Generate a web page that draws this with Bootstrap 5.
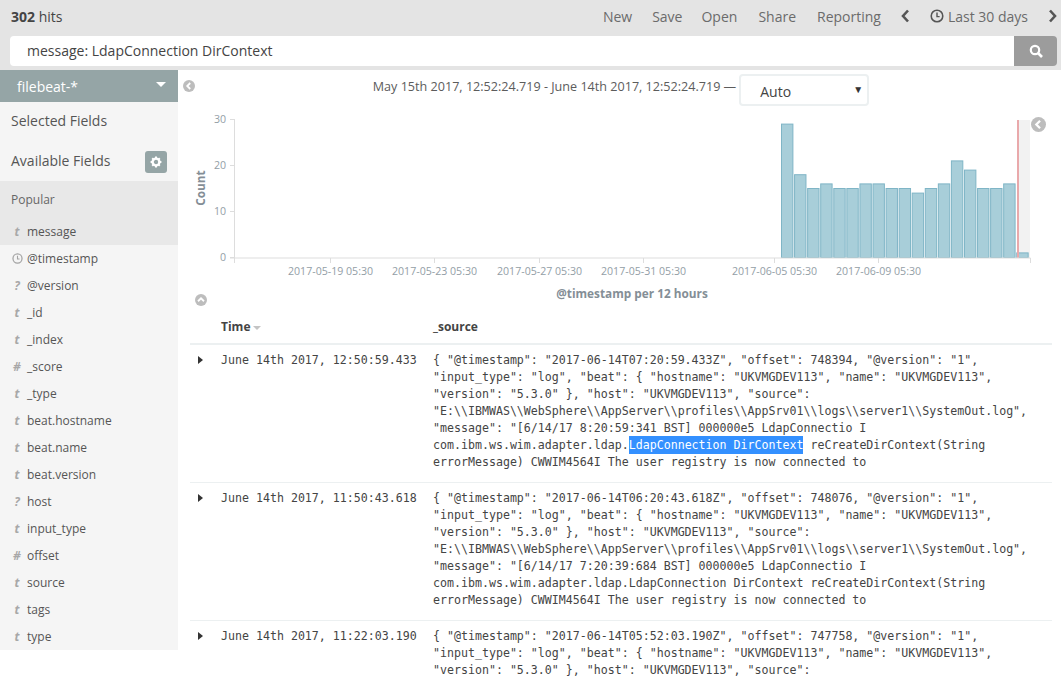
<!doctype html>
<html lang="en">

<head>
    <meta charset="utf-8">
    <meta name="viewport" content="width=device-width, initial-scale=1">
    <title>Discover - Kibana</title>
    <link href="https://cdn.jsdelivr.net/npm/bootstrap@5.3.3/dist/css/bootstrap.min.css" rel="stylesheet">
    <style>
        html, body {
            height: 680px;
            overflow: hidden;
        }

        body {
            font-family: "Open Sans", sans-serif;
            font-size: 14px;
            color: #444;
            background: #fff;
        }

        .top-bar {
            height: 36px;
            background: #e4e4e4;
            color: #5f5f5f;
            padding: 0 4px 4px 11px;
        }

        .top-bar .hits {
            color: #444;
        }

        .menu-link {
            color: #6b6b6b;
            margin-left: 21px;
        }

        .menu-first {
            margin-left: auto;
        }

        .menu-tight {
            margin-left: 19px;
        }

        .menu-new-gap {
            margin-left: 20px;
        }

        .menu-icon {
            flex: none;
            margin-left: 20px;
        }

        .menu-clock {
            color: #555;
            margin-right: 4px;
        }

        .search-row {
            height: 34px;
            background: #e4e4e4;
            padding: 0 4px 4px 10px;
        }

        .search-text {
            background: #fff;
            border-radius: 4px 0 0 4px;
            padding: 0 0 2px 17px;
            color: #444;
        }

        .search-btn {
            width: 43px;
            background: #9c9c9c;
            border-radius: 0 4px 4px 0;
        }

        .side-panel {
            width: 178px;
            height: 580px;
            flex: none;
        }

        .index-head {
            height: 32px;
            background: #95a5a6;
            color: #fff;
            padding: 0 12px 0 17px;
        }

        .caret-down {
            width: 0;
            height: 0;
            margin-top: -3px;
            border-left: 5px solid transparent;
            border-right: 5px solid transparent;
            border-top: 5px solid #fff;
        }

        .field-heads {
            background: #f5f5f5;
            height: 79px;
            padding: 0 11px;
        }

        .field-head {
            height: 40px;
            color: #555;
        }

        .field-head-text {
            margin-top: -4px;
        }

        .gear-btn {
            width: 22px;
            height: 22px;
            background: #95a5a6;
            border-radius: 3px;
        }

        .popular-block {
            background: #e8e8e8;
            height: 64px;
        }

        .popular-title {
            height: 37px;
            padding: 0 11px;
            font-size: 12px;
            color: #666;
        }

        .field-list {
            background: #f5f5f5;
            height: 405px;
        }

        .field-row {
            height: 27px;
            font-size: 12px;
            color: #555;
            padding-left: 11px;
        }

        .type-mark {
            width: 12px;
            margin-right: 4px;
            text-align: center;
            font-style: italic;
            font-weight: 700;
            color: #a8a8a8;
            flex: none;
        }

        .type-clock {
            color: #a3a3a3;
        }

        .main-pane {
            flex: 1;
            min-width: 0;
            height: 610px;
        }

        .time-line {
            height: 40px;
            padding: 4px 0 0 3px;
            font-size: 12.6px;
            color: #5c5c5c;
        }

        .time-range {
            margin-top: 4px;
        }

        .auto-select {
            width: 130px;
            height: 32px;
            border: 2px solid #ecf0f1;
            border-radius: 4px;
            margin-left: 3px;
            padding: 2px 4px 0 19px;
            font-size: 14px;
            color: #444;
        }

        .select-arrow {
            font-size: 10px;
            color: #333;
            margin-top: -3px;
        }

        .chart-box {
            display: block;
            width: 883px;
            height: 192px;
        }

        .chart-box text {
            font-family: "Open Sans", sans-serif;
            font-size: 10.6px;
            fill: #939ea6;
        }

        .chart-box .axis-title {
            font-size: 11.8px;
            font-weight: 700;
            fill: #848e96;
        }

        .round-toggle {
            position: absolute;
            display: block;
        }

        .toggle-side {
            left: 5px;
            top: 10px;
        }

        .toggle-spy {
            left: 853px;
            top: 47px;
        }

        .toggle-chart {
            left: 17px;
            top: 224px;
        }

        .doc-table {
            margin: 0 9px 0 12px;
            font-size: 11.62px;
        }

        .doc-head {
            height: 43px;
            padding-bottom: 7px;
            border-bottom: 2px solid #ecf0f1;
            font-size: 12px;
            font-weight: 700;
            color: #444;
        }

        .sort-arrow {
            display: inline-block;
            width: 0;
            height: 0;
            margin-left: 3px;
            vertical-align: 1px;
            border-left: 4px solid transparent;
            border-right: 4px solid transparent;
            border-top: 4px solid #c4c4c4;
        }

        .col-arrow {
            width: 31px;
            flex: none;
        }

        .col-time {
            width: 212px;
            flex: none;
        }

        .doc-row {
            padding: 7px 0 11px;
            border-bottom: 1px solid #ecf0f1;
            font-family: "DejaVu Sans Mono", monospace;
            line-height: 17px;
            color: #444;
        }

        .doc-row .source-text {
            white-space: pre;
        }

        .row-arrow {
            display: inline-block;
            width: 0;
            height: 0;
            margin-left: 8px;
            border-top: 4px solid transparent;
            border-bottom: 4px solid transparent;
            border-left: 5px solid #333;
        }

        .hl-text {
            padding: 2px 0;
            background: #3390ff;
            color: #fff;
        }
    </style>
</head>

<body>
    <svg width="0" height="0" class="position-absolute">
        <symbol id="ic-round-left" viewBox="0 0 24 24">
            <circle cx="12" cy="12" r="12" fill="#bdbdbd" />
            <path d="M14.5 6 L8.5 12 L14.5 18" fill="none" stroke="#fff" stroke-width="3.6" />
        </symbol>
        <symbol id="ic-round-up" viewBox="0 0 24 24">
            <circle cx="12" cy="12" r="12" fill="#bdbdbd" />
            <path d="M6 14.5 L12 8.5 L18 14.5" fill="none" stroke="#fff" stroke-width="3.6" />
        </symbol>
        <symbol id="ic-clock" viewBox="0 0 16 16">
            <circle cx="8" cy="8" r="6.6" fill="none" stroke="currentColor" stroke-width="1.8" />
            <path d="M8 4 V8.7 H11" fill="none" stroke="currentColor" stroke-width="1.6" />
        </symbol>
    </svg>

    <div class="top-bar d-flex align-items-center">
        <div class="hits"><b>302</b> hits</div>
        <span class="menu-link menu-first">New</span>
        <span class="menu-link menu-new-gap">Save</span>
        <span class="menu-link menu-tight">Open</span>
        <span class="menu-link">Share</span>
        <span class="menu-link">Reporting</span>
        <svg class="menu-icon" width="9" height="14" viewBox="0 0 9 14"><path d="M7 1.5 L2 7 L7 12.5" fill="none" stroke="#555" stroke-width="2.6" /></svg>
        <svg class="menu-icon menu-clock" width="14" height="14"><use href="#ic-clock" /></svg>
        <span class="menu-link ms-0">Last 30 days</span>
        <svg class="menu-icon" width="9" height="14" viewBox="0 0 9 14"><path d="M2 1.5 L7 7 L2 12.5" fill="none" stroke="#555" stroke-width="2.6" /></svg>
    </div>

    <div class="search-row d-flex">
        <div class="search-text flex-grow-1 d-flex align-items-center">message: LdapConnection DirContext</div>
        <div class="search-btn d-flex align-items-center justify-content-center">
            <svg width="14" height="14" viewBox="0 0 14 14"><circle cx="6" cy="6" r="4.2" fill="none" stroke="#fff" stroke-width="2.2" /><path d="M9 9 L13 13" stroke="#fff" stroke-width="2.6" /></svg>
        </div>
    </div>

    <div class="d-flex position-relative">
        <div class="side-panel">
            <div class="index-head d-flex align-items-center justify-content-between">
                <span>filebeat-*</span>
                <span class="caret-down"></span>
            </div>
            <div class="field-heads">
                <div class="field-head d-flex align-items-center"><span class="field-head-text">Selected Fields</span></div>
                <div class="field-head d-flex align-items-center justify-content-between">
                    <span class="field-head-text">Available Fields</span>
                    <span class="gear-btn d-flex align-items-center justify-content-center">
                        <svg width="12" height="12" viewBox="0 0 12 12"><circle cx="6" cy="6" r="3.4" fill="none" stroke="#fff" stroke-width="2.4" /><path d="M6 .6 V2.4 M6 9.6 V11.4 M.6 6 H2.4 M9.6 6 H11.4 M2.2 2.2 L3.4 3.4 M8.6 8.6 L9.8 9.8 M2.2 9.8 L3.4 8.6 M8.6 3.4 L9.8 2.2" stroke="#fff" stroke-width="2" /></svg>
                    </span>
                </div>
            </div>
            <div class="popular-block">
                <div class="popular-title d-flex align-items-center">Popular</div>
                <div class="field-row d-flex align-items-center"><span class="type-mark">t</span>message</div>
            </div>
            <div class="field-list">
                <div class="field-row d-flex align-items-center"><span class="type-mark d-flex justify-content-center"><svg class="type-clock" width="11" height="11"><use href="#ic-clock" /></svg></span>@timestamp</div>
                <div class="field-row d-flex align-items-center"><span class="type-mark">?</span>@version</div>
                <div class="field-row d-flex align-items-center"><span class="type-mark">t</span>_id</div>
                <div class="field-row d-flex align-items-center"><span class="type-mark">t</span>_index</div>
                <div class="field-row d-flex align-items-center"><span class="type-mark">#</span>_score</div>
                <div class="field-row d-flex align-items-center"><span class="type-mark">t</span>_type</div>
                <div class="field-row d-flex align-items-center"><span class="type-mark">t</span>beat.hostname</div>
                <div class="field-row d-flex align-items-center"><span class="type-mark">t</span>beat.name</div>
                <div class="field-row d-flex align-items-center"><span class="type-mark">t</span>beat.version</div>
                <div class="field-row d-flex align-items-center"><span class="type-mark">?</span>host</div>
                <div class="field-row d-flex align-items-center"><span class="type-mark">t</span>input_type</div>
                <div class="field-row d-flex align-items-center"><span class="type-mark">#</span>offset</div>
                <div class="field-row d-flex align-items-center"><span class="type-mark">t</span>source</div>
                <div class="field-row d-flex align-items-center"><span class="type-mark">t</span>tags</div>
                <div class="field-row d-flex align-items-center"><span class="type-mark">t</span>type</div>
            </div>
        </div>

        <div class="main-pane position-relative">
            <svg class="round-toggle toggle-side" width="12" height="12"><use href="#ic-round-left" /></svg>
            <svg class="round-toggle toggle-spy" width="15" height="15"><use href="#ic-round-left" /></svg>
            <svg class="round-toggle toggle-chart" width="12" height="12"><use href="#ic-round-up" /></svg>

            <div class="time-line d-flex align-items-start justify-content-center">
                <span class="time-range">May 15th 2017, 12:52:24.719 - June 14th 2017, 12:52:24.719 &mdash;</span>
                <div class="auto-select d-flex align-items-center justify-content-between">
                    <span>Auto</span><span class="select-arrow">&#9660;</span>
                </div>
            </div>

            <svg class="chart-box" id="chart" viewBox="178 110 883 192"></svg>

            <div class="doc-table">
                <div class="doc-head d-flex align-items-end">
                    <div class="col-arrow"></div>
                    <div class="col-time">Time<span class="sort-arrow"></span></div>
                    <div>_source</div>
                </div>
                <div class="doc-row d-flex">
                    <div class="col-arrow"><span class="row-arrow"></span></div>
                    <div class="col-time">June 14th 2017, 12:50:59.433</div>
                    <div class="source-text">{ "@timestamp": "2017-06-14T07:20:59.433Z", "offset": 748394, "@version": "1",
"input_type": "log", "beat": { "hostname": "UKVMGDEV113", "name": "UKVMGDEV113",
"version": "5.3.0" }, "host": "UKVMGDEV113", "source":
"E:\\IBMWAS\\WebSphere\\AppServer\\profiles\\AppSrv01\\logs\\server1\\SystemOut.log",
"message": "[6/14/17 8:20:59:341 BST] 000000e5 LdapConnectio I
com.ibm.ws.wim.adapter.ldap.<span class="hl-text">LdapConnection DirContext</span> reCreateDirContext(String
errorMessage) CWWIM4564I The user registry is now connected to</div>
                </div>
                <div class="doc-row d-flex">
                    <div class="col-arrow"><span class="row-arrow"></span></div>
                    <div class="col-time">June 14th 2017, 11:50:43.618</div>
                    <div class="source-text">{ "@timestamp": "2017-06-14T06:20:43.618Z", "offset": 748076, "@version": "1",
"input_type": "log", "beat": { "hostname": "UKVMGDEV113", "name": "UKVMGDEV113",
"version": "5.3.0" }, "host": "UKVMGDEV113", "source":
"E:\\IBMWAS\\WebSphere\\AppServer\\profiles\\AppSrv01\\logs\\server1\\SystemOut.log",
"message": "[6/14/17 7:20:39:684 BST] 000000e5 LdapConnectio I
com.ibm.ws.wim.adapter.ldap.LdapConnection DirContext reCreateDirContext(String
errorMessage) CWWIM4564I The user registry is now connected to</div>
                </div>
                <div class="doc-row d-flex">
                    <div class="col-arrow"><span class="row-arrow"></span></div>
                    <div class="col-time">June 14th 2017, 11:22:03.190</div>
                    <div class="source-text">{ "@timestamp": "2017-06-14T05:52:03.190Z", "offset": 747758, "@version": "1",
"input_type": "log", "beat": { "hostname": "UKVMGDEV113", "name": "UKVMGDEV113",
"version": "5.3.0" }, "host": "UKVMGDEV113", "source":</div>
                </div>
            </div>
        </div>
    </div>

    <script>
        // histogram, coordinates are page pixels (see viewBox)
        const counts = [29, 18, 15, 16, 15, 15, 16, 16, 15, 15, 14, 15, 16, 21, 19, 15, 15, 16, 1];
        const base = 257.5;
        const unit = 4.6;
        let out = '<rect x="1017" y="120" width="13" height="138" fill="#f2f2f2"/>';

        counts.forEach((c, i) => {
            const x = 781.5 + i * 13.07;
            const h = c * unit;
            out += `<rect x="${x}" y="${base - h}" width="11.4" height="${h}" fill="#a8ced9" stroke="#7fb5c6" stroke-width="1"/>`;
        });
        out += '<rect x="1017" y="120" width="2" height="138" fill="#e9a9ab"/>';

        // axes
        out += '<path d="M234.5 119 V263 M230 258 H1030.5" fill="none" stroke="#ddd"/>';
        [[30, 119.5], [20, 165.5], [10, 211.5], [0, 257.5]].forEach(([v, y]) => {
            out += `<path d="M230 ${y} H234.5" stroke="#ddd"/><text x="226" y="${y + 3.5}" text-anchor="end">${v}</text>`;
        });
        [[288, '2017-05-19 05:30'], [392, '2017-05-23 05:30'], [497, '2017-05-27 05:30'], [601, '2017-05-31 05:30'], [732, '2017-06-05 05:30'], [836, '2017-06-09 05:30']].forEach(([x, label]) => {
            out += `<path d="M${x + 42.5} 258 V263" stroke="#ddd"/><text x="${x}" y="275">${label}</text>`;
        });
        out += '<path d="M1030.5 258 V263" stroke="#ddd"/>';
        out += '<text class="axis-title" x="632" y="298" text-anchor="middle">@timestamp per 12 hours</text>';
        out += '<text class="axis-title" transform="translate(205 188) rotate(-90)" text-anchor="middle">Count</text>';
        document.getElementById('chart').innerHTML = out;
    </script>
    <script src="https://cdn.jsdelivr.net/npm/bootstrap@5.3.3/dist/js/bootstrap.bundle.min.js"></script>
</body>

</html>
